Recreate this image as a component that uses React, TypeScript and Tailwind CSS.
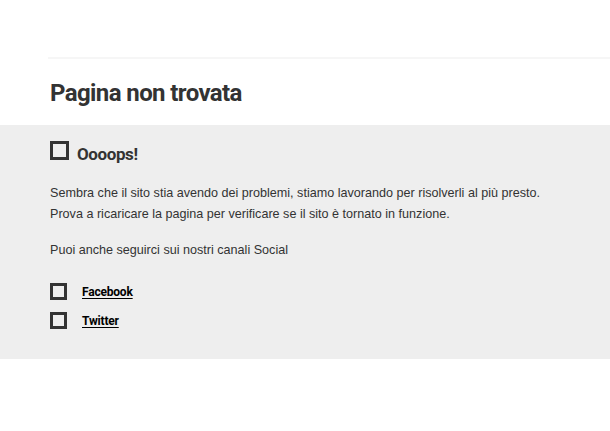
export default function App() {
  const titleFont = "font-['Roboto','Noto_Sans',sans-serif]";
  return (
    <div className="min-h-screen bg-white text-[#333] font-['Liberation_Sans',Arial,sans-serif]">
      <div className="pt-[57px] pl-12">
        <div className="h-[2px] bg-[#f6f6f6]"></div>
      </div>

      <div className="pl-[50px] pt-[20px] pb-[18px]">
        <h1 className={`${titleFont} text-[24px] leading-[28px] font-bold tracking-[-0.6px] text-[#333]`}>
          Pagina non trovata
        </h1>
      </div>

      <section className="bg-[#eeeeee] pl-[50px] pt-[16px] pb-[30px]">
        <div className="flex items-start gap-[8px]">
          <span className="w-[19px] h-[19px] border-[3px] border-[#333] shrink-0"></span>
          <h2 className={`${titleFont} text-[17px] font-bold tracking-[-0.4px] leading-[19px] mt-[4px]`}>
            Oooops!
          </h2>
        </div>

        <p className="mt-[19px] text-[12.6px] leading-[21px] text-[#333]">
          Sembra che il sito stia avendo dei problemi, stiamo lavorando per risolverli al più presto.
          <br />
          Prova a ricaricare la pagina per verificare se il sito è tornato in funzione.
        </p>

        <p className="mt-[15px] text-[12.6px] leading-[21px] text-[#333]">
          Puoi anche seguirci sui nostri canali Social
        </p>

        <ul className="mt-[22px] flex flex-col gap-[12px]">
          {["Facebook", "Twitter"].map((name) => (
            <li key={name} className="flex items-center gap-[15px] h-[17px]">
              <span className="w-[17px] h-[17px] border-[3px] border-[#333] shrink-0"></span>
              <a
                href="#"
                className={`${titleFont} text-[12px] font-bold tracking-[-0.2px] text-black underline underline-offset-2`}
              >
                {name}
              </a>
            </li>
          ))}
        </ul>
      </section>
    </div>
  );
}
